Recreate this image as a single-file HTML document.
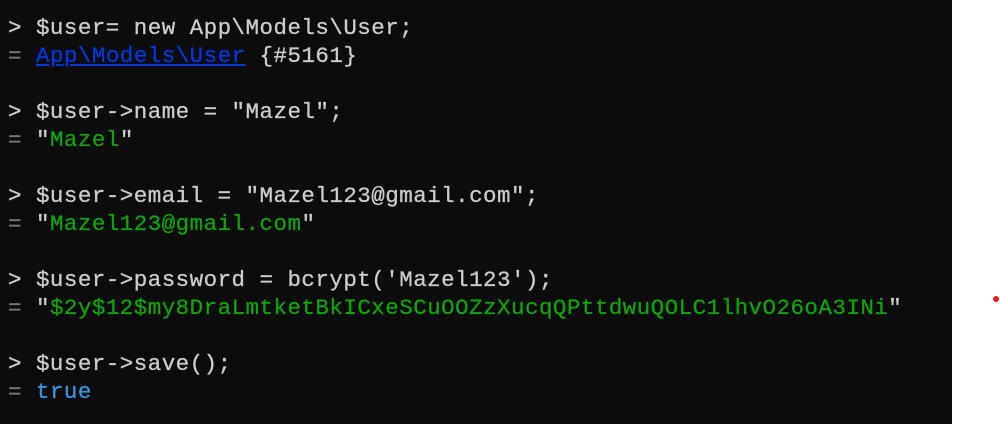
<!DOCTYPE html>
<html><head><style>
html,body{margin:0;padding:0;width:1000px;height:424px;overflow:hidden;background:#fff}
#t{position:absolute;left:0;top:0;width:952px;height:424px;background:#0c0c0c}
pre{margin:0;position:absolute;left:8px;top:14px;font-family:"Liberation Mono",monospace;font-size:22.5px;letter-spacing:0.47px;line-height:28px;color:#cccccc;-webkit-text-stroke:0.3px currentColor}
.g{color:#13a10e}.b{color:#0037da;text-decoration:underline}.c{color:#3a96dd}.d{color:#767676}
#dot{position:absolute;left:993px;top:296px;width:6px;height:6px;border-radius:50%;background:#e02020}
</style></head><body>
<div id="t"><pre>&gt; $user= new App\Models\User;
<span class="d">=</span> <span class="b">App\Models\User</span> {#5161}

&gt; $user-&gt;name = "Mazel";
<span class="d">=</span> "<span class="g">Mazel</span>"

&gt; $user-&gt;email = "Mazel123@gmail.com";
<span class="d">=</span> "<span class="g">Mazel123@gmail.com</span>"

&gt; $user-&gt;password = bcrypt('Mazel123');
<span class="d">=</span> "<span class="g">$2y$12$my8DraLmtketBkICxeSCuOOZzXucqQPttdwuQOLC1lhvO26oA3INi</span>"

&gt; $user-&gt;save();
<span class="d">=</span> <span class="c">true</span></pre></div>
<div id="dot"></div>
</body></html>
